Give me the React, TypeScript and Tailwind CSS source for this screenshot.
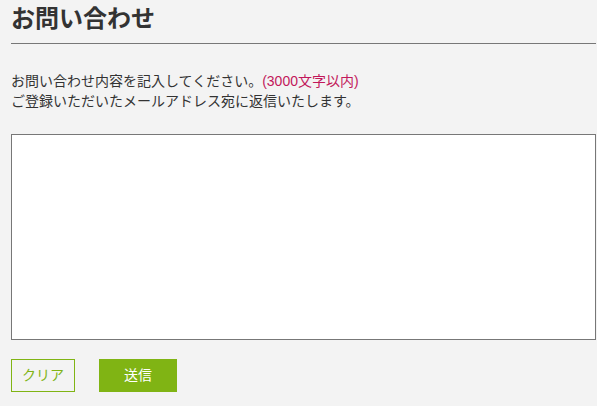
export default function App() {
  return (
    <main
      className="min-h-[406px] bg-[#f3f3f3] pl-[11px] pr-px pt-[3px] text-[#333]"
      style={{ fontFamily: '"Liberation Sans", "Noto Sans CJK JP", sans-serif' }}
    >
      <h1 className="border-b border-[#777] pb-[8px] text-[24px] font-bold leading-[32px]">
        お問い合わせ
      </h1>

      <p className="mt-[27px] text-[14px] leading-[20px]">
        お問い合わせ内容を記入してください。
        <span className="text-[#c2185b]">(3000文字以内)</span>
        <br />
        ご登録いただいたメールアドレス宛に返信いたします。
      </p>

      <textarea className="mt-[23px] block h-[206px] w-[585px] resize-none border border-[#777] bg-white p-2 text-[14px] outline-none" />

      <div className="mt-[19px] flex gap-[24px]">
        <button className="h-[33px] w-[64px] border border-[#80b414] bg-transparent text-[14px] text-[#80b414]">
          クリア
        </button>
        <button className="h-[33px] w-[78px] bg-[#80b414] text-[14px] text-white">
          送信
        </button>
      </div>
    </main>
  );
}
